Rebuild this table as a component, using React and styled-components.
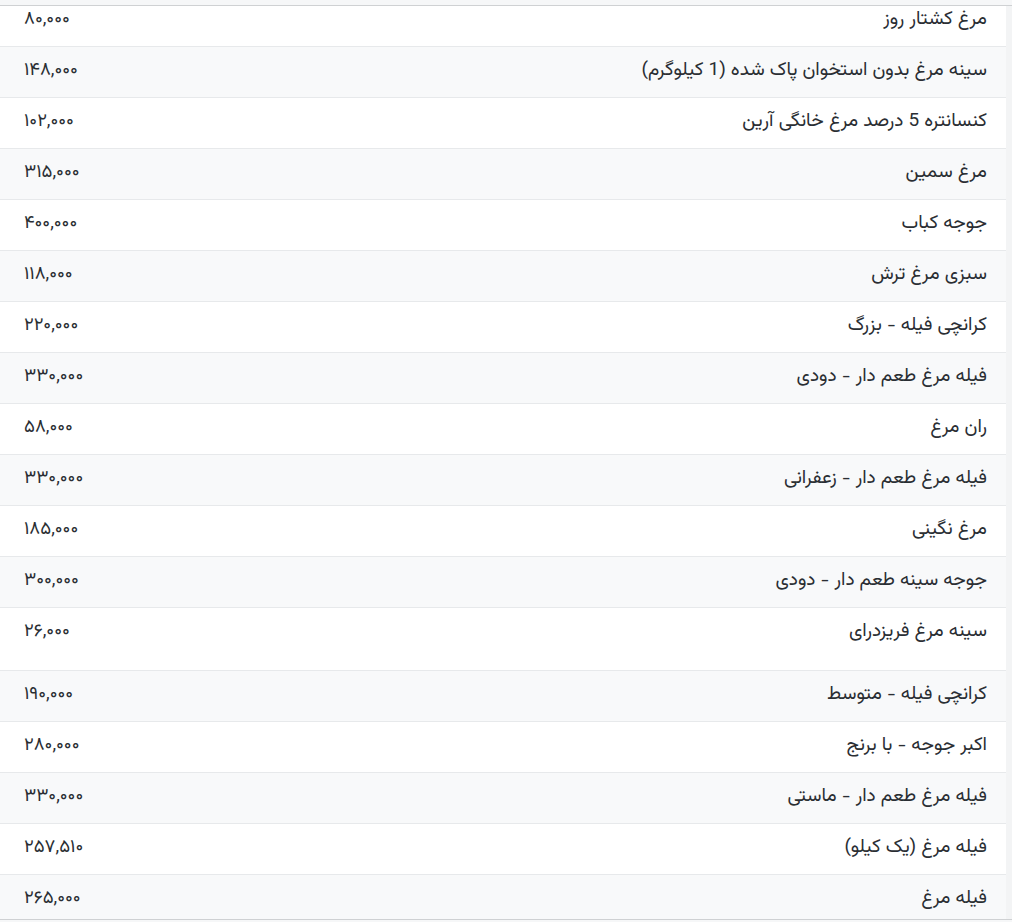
import React from 'react'
import styled, { createGlobalStyle } from 'styled-components'

const GlobalStyle = createGlobalStyle`
  html, body {
    margin: 0;
    padding: 0;
    background: #f6f7f8;
  }
  body {
    font-family: 'Vazirmatn', 'Noto Sans Arabic', 'DejaVu Sans', sans-serif;
  }
`

const Page = styled.div`
  padding-top: 5px;
  height: 922px;
  box-sizing: border-box;
`

const Frame = styled.div`
  display: flex;
  height: 915px;
  box-sizing: border-box;
  border-top: 1px solid #cfd1d3;
  border-bottom: 1px solid #cfd1d3;
  overflow: hidden;
  background: #fff;
`

const Scroller = styled.div`
  flex: 1;
  overflow: hidden;
`

const Track = styled.div`
  width: 6px;
  background: #f3f4f5;
`

const Table = styled.div`
  direction: rtl;
  margin-top: -10px;
`

const Row = styled.div`
  display: flex;
  justify-content: space-between;
  align-items: flex-start;
  box-sizing: border-box;
  height: ${p => (p.tall ? 63 : 51)}px;
  padding: 10px 19px 0 24px;
  border-bottom: 1px solid #e7e9eb;
  background: ${p => (p.striped ? '#f8f9fa' : '#fff')};
  color: #2a2e33;
  font-size: 19px;
  line-height: 28px;
`

const Name = styled.span`
  white-space: nowrap;
`

const Price = styled.span`
  direction: ltr;
  min-width: 62px;
  text-align: left;
  font-size: 18.5px;
`

const fa = n => n.replace(/\d/g, d => '۰۱۲۳۴۵۶۷۸۹'[d])

const items = [
  ['مرغ کشتار روز', '80,000'],
  ['سینه مرغ بدون استخوان پاک شده (1 کیلوگرم)', '148,000'],
  ['کنسانتره 5 درصد مرغ خانگی آرین', '102,000'],
  ['مرغ سمین', '315,000'],
  ['جوجه کباب', '400,000'],
  ['سبزی مرغ ترش', '118,000'],
  ['کرانچی فیله - بزرگ', '220,000'],
  ['فیله مرغ طعم دار - دودی', '330,000'],
  ['ران مرغ', '58,000'],
  ['فیله مرغ طعم دار - زعفرانی', '330,000'],
  ['مرغ نگینی', '185,000'],
  ['جوجه سینه طعم دار - دودی', '300,000'],
  ['سینه مرغ فریزدرای', '26,000', true],
  ['کرانچی فیله - متوسط', '190,000'],
  ['اکبر جوجه - با برنج', '280,000'],
  ['فیله مرغ طعم دار - ماستی', '330,000'],
  ['فیله مرغ (یک کیلو)', '257,510'],
  ['فیله مرغ', '265,000'],
]

const App = () => {
  return (
    <Page>
      <GlobalStyle />
      <Frame>
        <Scroller>
          <Table>
            {items.map(([name, price, tall], i) => (
              <Row key={i} striped={i % 2 === 1} tall={tall}>
                <Name>{name}</Name>
                <Price>{fa(price)}</Price>
              </Row>
            ))}
          </Table>
        </Scroller>
        <Track />
      </Frame>
    </Page>
  )
}

export default App
